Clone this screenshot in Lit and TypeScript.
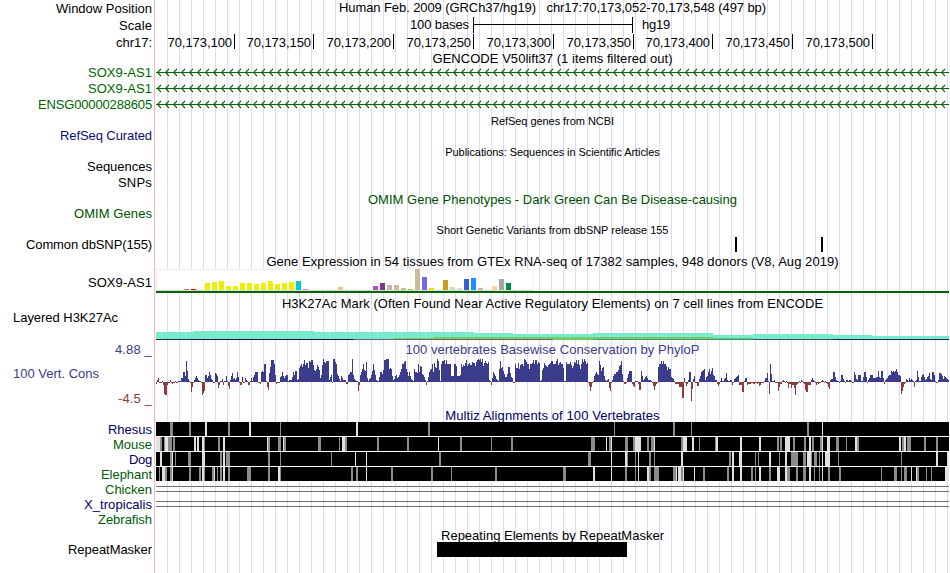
import { LitElement, html, svg, css, nothing } from 'lit';
import { customElement } from 'lit/decorators.js';

const LEFT = 156;
const WIDTH = 793;
const FONT = '"Liberation Sans", Arial, sans-serif';

const pen = document.createElement('canvas').getContext('2d')!;

// letter spacing that gives a text the wanted width
function spacing(text: string, size: number, width: number) {
  pen.font = `${size}px ${FONT}`;
  return `letter-spacing:${((width - pen.measureText(text).width) / text.length).toFixed(3)}px`;
}

interface Label { text: string; width: number; color?: string; dy?: number; left?: boolean; }
interface Title { text: string; width: number; color?: string; dy?: number; small?: boolean; }
interface Row { height: number; labels?: Label[]; title?: Title; art?: unknown; }

const NAVY = '#0c0c78';
const GREEN = '#006400';
const CONS = '#3c3c8c';
const RED = '#8c3c3c';
const CHROM_A = '#000064';
const CHROM_B = '#005a0a';

const rect = (x: number, y: number, w: number, h: number, fill: string) =>
  svg`<rect x=${x - LEFT} y=${y} width=${w} height=${h} fill=${fill}></rect>`;

const scaleArt = [
  rect(473, 0, 1, 16, '#000'),
  rect(632, 0, 1, 16, '#000'),
  rect(473, 7, 160, 1, '#000'),
];

const ticks = [234, 313, 393, 473, 553, 633, 712, 792, 872];
const tickArt = ticks.map((x) => rect(x, 0, 1, 15, '#000'));

const arrows = Array.from({ length: 99 }, (_, i) => {
  const x = 1.5 + i * 8;
  return `M${x + 3.5} 5L${x} 8.5L${x + 3.5} 12`;
}).join('');
const geneArt = [
  rect(156, 8, 793, 1, GREEN),
  svg`<path d=${arrows} fill="none" stroke=${GREEN} stroke-width="1.1"></path>`,
];

const snpArt = [rect(735, 0, 2, 15, '#000'), rect(821, 0, 2, 15, '#000')];

// [x, height, color]
const tissues: [number, number, string][] = [
  [184, 1, '#ee6a50'], [191, 1, '#ff0000'],
  ...[7, 8, 9, 4, 4, 7, 7, 6, 7, 9, 6, 7, 8].map((h, i) => [205 + i * 7, h, '#eeee00'] as [number, number, string]),
  [296, 9, '#00cdcd'], [303, 1, '#ee82ee'], [338, 3, '#eec591'],
  [373, 4, '#b452cd'], [380, 7, '#7a378b'], [387, 5, '#cdb79e'], [394, 5, '#cdb79e'],
  [401, 2, '#cdb79e'], [408, 1, '#9acd32'], [415, 21, '#cdb79e'], [422, 13, '#7a67ee'],
  [429, 2, '#ffd700'], [443, 10, '#cd9b1d'], [450, 3, '#b4eeb4'], [457, 2, '#d9d9d9'],
  [464, 11, '#3a5fcd'], [471, 12, '#1e90ff'], [478, 2, '#cdb79e'], [492, 4, '#ffd39b'],
  [499, 11, '#a6a6a6'], [506, 7, '#008b45'],
];
const gtexArt = [
  rect(156, 1, 378, 22, '#f0f0f0'),
  rect(157, 2, 376, 20, '#fff'),
  rect(156, 22, 378, 1, '#d9d9d9'),
  ...tissues.map(([x, h, c]) => rect(x, 22 - h, 5, h, c)),
  rect(156, 23, 793, 2, GREEN),
];

// [from, to, top, color]
const marks: [number, number, number, string][] = [
  [156, 194, 21, '#78ebcd'], [194, 314, 20, '#78ebcd'], [314, 474, 21, '#78ebcd'],
  [474, 513, 22, '#78ebcd'], [513, 593, 23, '#78ebcd'], [593, 713, 22, '#78ebcd'],
  [713, 753, 24, '#78ebcd'], [753, 833, 23, '#78ebcd'], [833, 872, 24, '#78ebcd'],
  [872, 949, 25, '#78ebcd'],
  [394, 434, 27, '#78c86e'], [434, 713, 26, '#78c86e'], [713, 753, 27, '#64be78'],
  [156, 194, 28, '#1c2c46'], [194, 354, 28, '#1e1450'], [354, 553, 28, '#6c646c'],
  [553, 593, 28, '#78c864'], [593, 713, 28, '#3ca070'], [713, 753, 28, '#3c9a6a'],
  [753, 833, 28, '#32505a'], [833, 949, 28, '#1e1e5a'],
];
const markArt = marks.map(([a, b, y, c]) => rect(a, y, b - a, y === 28 ? 1 : 28 - y, c));

// runs of per-pixel scores; the last value of a run is held up to the next one
const scores = `156:-2 2 4 -1 -1 -1 1 -3 -12 -13 -13 -3 -1 -1 2 -1 -2 -1 -1 1 -1 -1 1 1 1 4 4 10 10 6 21 11 3 1 -1
191:-10 -5 -1 2 4 6 4 2 1 1 -1 -13 -11 -9 7 7 4 6 10 7 3 2 -1 -1 9 8 6 -6 -3 1 1 3 -3 1 1 6 1 -4 -7 2 6 9 3 4 2 4 10 5 -1
240:-3 -3 5 -1 -1 4 2 1 -3 -3 1 4 1 5 7 10 10 10 -1 -1 -2 10 11 10 18 18 1 -5 -8 9 15 22 22 22 18 7 -2 -1 -1 -1
280:5 6 10 6 4 6 7 7 1 2 2 2 5 10 7 11 11 2 3 14 16 18 15 18 22 17 19 19 14 21 20 22 22 17 12 11 13 17 15 12 4 7 17 23 20 19 21 21 21 2 5 7 -1 -1
333:23 23 20 18 8 6 3 1 6 4 2 2 2 -2 -2 7 8 10 10 23 7 3 2 1 1 -9 -3 7 10 13 18 12 11 20 4 1 -17
368:1 3 4 7 11 18 12 7 2 1 1 5 10 10 8 12 22 22 23 23 23 13 14 13 6 2 3 6 7 4 5 7 10 13 18 18 20 21 13 10 6 10 6 3 2 1 4 10 12 11 13
414:13 10 10 9 18 10 16 15 8 7 5 2 -3 1 5 10 12 13 18 10 19 15 14 23 21 12 1 18 21 21 22 18 22 18 18 18 18 6 6 6
454:18 18 16 6 6 6 7 18 15 17 16 19 22 16 18 19 17 17 20 19 19 16 20 22 23 22 23 20 23 16 19 21 19 18 20 2 1 -3 4 10 8 6 3 2 1 13 21 14 15 11 8 5
506:5 8 15 15 9 5 4 -1 -1 18 14 14 19 13 17 18 18 16 23 22 20 18 18 13 18 18 19 22 18 22 22 18 20 19 1 2 12 14 19 17 16 15 17 18 19 21 21 18
556:21 23 17 19 20 18 18 14 1 1 20 18 18 18 20 17 14 16 20 19 22 18 22 17 13 18 23 20 23 21 18 19 17
588:-1 -4 -9 -5 -1 1 6 8 10 8 7 21 17 11 14 15 6 2 1 2 3 -6 -9 -1 2 6 8 8 10 10 12 16 17 21 8 1 -2 -2 -1 4 8 11 11 11 -2 -4 -5 1
637:1 -2 -8 -8 11 6 2 3 5 6 4 2 2 2 1 -1 -4 -8 -4 -2 -1 15 18 18 21 18 21 18 18 16 12 15 13 13 5 4 3 1 -2
679:-5 -5 -5 -16 -16 4 -1 -4 -2 2 10 10 -19 -7 3 6 -1 -1 -4 -4 3 6 10 11 12 13 2 5 6 10 13 8 11 14 7 6 2
717:-2 -4 -2 1 4 1 1 3 4 9 2 1 1 2 2 -3 -1 3 4 5 6 7 -3 -3 -3 -10 -10 1 4 4 -3 -2 -2 -2 -1 -1 -2 -2 -1 -1 -2 -1 -4 -3 -1 -1
764:1 4 4 9 1 -12 18 8 1 1 2 -1 -1 -1 -9 -5 -2 -2 1 2 1 -1 1 -1 -6 -2 -2 -6 -3 -3 -6 -13 -3 -2 -1 1 -1 2 1 -1 -2 -8 -10 -10 -3
811:2 4 2 1 -1 -3 -1 -2 -1 -1 1 2 1 -1 1 -1 -2 -5 -7 2 3 3 10 10 5 2 1 1 -1 1 7 7 3 1 -1 2 2 1 2 2 1 -1 -1 10 7 3 2
858:7 7 7 1 1 5 10 10 5 -1 2 4 7 7 7 4 4 4 5 5 11 5 4 11 11 4 -2 2 3 4 6 7 7 11 10 11 10 11 13 10 7 7 6 4 3 3
901:-12 -9 -5 -2 -1 3 2 1 4 2 3 2 1 -5 1 2 11 5 1 1 5 7 8 5 2 3 5 6 9 3 2 10 10 7 1 -1 -1 2 9 9 8 6 3 6 5 4 3 2`;

const wiggle: number[] = [];
for (const run of scores.split('\n')) {
  const [start, values] = run.split(':');
  const at = Number(start) - LEFT;
  while (wiggle.length < at) wiggle.push(wiggle[wiggle.length - 1]);
  values.split(' ').forEach((v, i) => { wiggle[at + i] = Number(v); });
}
const wigglePath = (sign: number) => wiggle
  .slice(0, WIDTH)
  .map((v, i) => (v * sign > 0 ? `M${i} 41h1v${-v}h-1z` : ''))
  .join('');
const consArt = [
  svg`<path d=${wigglePath(1)} fill=${CONS}></path>`,
  svg`<path d=${wigglePath(-1)} fill=${RED}></path>`,
];

// gaps per species: x, width, g(ray) or w(hite)
const rhesus = '170 3g,189 2g,205 2w,228 2g,249 2w,280 1g,356 2w,428 2g,614 1g,673 2g,691 1g,807 2g,822 1w';
const mouse = '156 4w,160 2g,164 1g,165 3w,168 4g,173 2g,194 2w,197 2w,202 2w,204 1g,218 2g,223 2w,267 1w,268 2g,278 3g,283 1w,284 2g,318 3g,339 1g,342 3w,345 2g,377 2g,407 2g,438 1w,460 2g,491 1g,511 2g,591 4g,606 1w,609 2g,611 1w,625 3g,633 2g,635 6w,647 2g,651 3g,654 1w,681 2g,683 4w,692 2w,699 1g,715 1g,716 2w,740 2w,759 2w,777 2g,780 2g,785 5w,793 2g,804 2g,809 2w,812 2g,820 2g,822 1w,827 3w,836 3g,846 1g,855 2w,857 2g,899 2w,902 2g,904 2w,907 4g,924 2g,936 2g';
const dog = '160 2w,170 2g,172 1w,175 1g,188 3g,202 3w,220 2g,223 2w,226 4g,268 2g,280 1g,331 1g,355 1w,366 1w,439 2g,588 3g,611 1w,625 2w,627 1g,635 1g,638 1w,649 2g,654 1g,681 2w,729 2g,732 2w,739 3w,755 1g,758 1g,769 2w,779 1g,785 2w,791 7g,803 3g,807 4w,811 1g,814 3g,819 1g,822 1w,825 5w,838 1g,901 1g,936 2w,947 2w';
const elephant = '159 1g,162 3w,165 2g,170 2g,172 1w,189 2g,199 2g,202 2w,204 1g,212 2g,214 1w,217 1g,220 2g,223 2w,228 2g,247 4g,268 2g,278 2w,280 1g,351 2g,356 2g,366 1w,391 2g,431 2g,451 1g,495 2g,563 3g,593 2w,611 1w,625 2g,635 1g,638 1w,647 2w,649 2g,654 5g,673 3g,676 1w,678 3w,681 2g,683 1w,694 1w,703 2g,727 2g,732 2w,740 2w,751 2g,755 1g,759 2w,769 2g,777 3w,785 2w,787 3g,796 2g,803 3g,809 2w,814 1g,819 1g,822 1w,828 2g,839 2g,881 1g,894 3g,901 1g,904 3g,911 1w,916 1w,917 2g,926 1g,931 1g,945 4w';
const align = (gaps: string) => [
  rect(156, 0, 793, 14, '#000'),
  rect(156, 14, 793, 1, '#fff'),
  ...gaps.split(',').map((gap) => {
    const [x, w] = gap.split(' ');
    return rect(Number(x), 0, parseInt(w), 14, w.endsWith('g') ? '#8c8c8c' : '#e1e1e1');
  }),
];

const bridge = [rect(156, 4, 793, 1, '#707070'), rect(156, 9, 793, 1, '#707070')];

const rows: Row[] = [
  { height: 17, labels: [{ text: 'Window Position', width: 96, dy: 1 }], title: { text: 'Human Feb. 2009 (GRCh37/hg19)   chr17:70,173,052-70,173,548 (497 bp)', width: 427 } },
  { height: 17, labels: [{ text: 'Scale', width: 33, dy: 1 }], art: scaleArt },
  { height: 17, labels: [{ text: 'chr17:', width: 36, dy: 1 }], art: tickArt },
  { height: 13, title: { text: 'GENCODE V50lift37 (1 items filtered out)', width: 240, dy: 0 } },
  { height: 16, labels: [{ text: 'SOX9-AS1', width: 64, color: GREEN, dy: 1 }], art: geneArt },
  { height: 16, labels: [{ text: 'SOX9-AS1', width: 64, color: GREEN, dy: 1 }], art: geneArt },
  { height: 16, labels: [{ text: 'ENSG00000288605', width: 114, color: GREEN, dy: 1 }], art: geneArt },
  { height: 16, title: { text: 'RefSeq genes from NCBI', width: 123, small: true, dy: 2 } },
  { height: 15, labels: [{ text: 'RefSeq Curated', width: 92, color: NAVY }] },
  { height: 16, title: { text: 'Publications: Sequences in Scientific Articles', width: 215, small: true, dy: 2 } },
  { height: 15, labels: [{ text: 'Sequences', width: 65 }] },
  { height: 16, labels: [{ text: 'SNPs', width: 34, dy: 1 }] },
  { height: 16, title: { text: 'OMIM Gene Phenotypes - Dark Green Can Be Disease-causing', width: 369, color: '#005000', dy: 2 } },
  { height: 15, labels: [{ text: 'OMIM Genes', width: 78, color: '#005000' }] },
  { height: 16, title: { text: 'Short Genetic Variants from dbSNP release 155', width: 232, small: true, dy: 2 } },
  { height: 15, labels: [{ text: 'Common dbSNP(155)', width: 126 }], art: snpArt },
  { height: 16, title: { text: 'Gene Expression in 54 tissues from GTEx RNA-seq of 17382 samples, 948 donors (V8, Aug 2019)', width: 573, dy: 2 } },
  { height: 27, labels: [{ text: 'SOX9-AS1', width: 64, dy: 7 }], art: gtexArt },
  { height: 16, title: { text: 'H3K27Ac Mark (Often Found Near Active Regulatory Elements) on 7 cell lines from ENCODE', width: 542, dy: 1 } },
  { height: 30, labels: [{ text: 'Layered H3K27Ac', width: 105, left: true, dy: -1 }], art: markArt },
  {
    height: 66,
    labels: [
      { text: '4.88 _', width: 37, color: CONS, dy: 1 },
      { text: '100 Vert. Cons', width: 86, color: CONS, left: true, dy: 9 },
      { text: '-4.5 _', width: 34, color: RED, dy: 10 },
    ],
    title: { text: '100 vertebrates Basewise Conservation by PhyloP', width: 294, color: CONS, dy: 1 },
    art: consArt,
  },
  { height: 15, title: { text: 'Multiz Alignments of 100 Vertebrates', width: 215, color: CHROM_A, dy: 1 } },
  { height: 15, labels: [{ text: 'Rhesus', width: 44, color: CHROM_A }], art: align(rhesus) },
  { height: 15, labels: [{ text: 'Mouse', width: 39, color: CHROM_B }], art: align(mouse) },
  { height: 15, labels: [{ text: 'Dog', width: 23, color: CHROM_A }], art: align(dog) },
  { height: 15, labels: [{ text: 'Elephant', width: 51, color: CHROM_B }], art: align(elephant) },
  { height: 15, labels: [{ text: 'Chicken', width: 47, color: CHROM_B }], art: bridge },
  { height: 15, labels: [{ text: 'X_tropicalis', width: 68, color: CHROM_A }], art: bridge },
  { height: 15, labels: [{ text: 'Zebrafish', width: 54, color: CHROM_B }] },
  { height: 15, title: { text: 'Repeating Elements by RepeatMasker', width: 223, dy: 1 } },
  { height: 31, labels: [{ text: 'RepeatMasker', width: 84 }], art: rect(437, 0, 190, 15, '#000') },
];

@customElement('app-root')
export class AppRoot extends LitElement {
  static styles = css`
    :host {
      display: block;
      width: 950px;
      height: 573px;
      overflow: hidden;
      background: #fff;
      color: #000;
      font: 13px/15px "Liberation Sans", Arial, sans-serif;
    }
    .browser {
      height: 573px;
      background:
        linear-gradient(#ffb4b4, #ffb4b4) 154px 0 / 1px 100% no-repeat,
        repeating-linear-gradient(90deg, #dcdcfa 0 1px, transparent 1px 12px) 167px 0 / 783px 100% no-repeat;
    }
    .row {
      display: grid;
      grid-template-columns: 152px 793px;
      column-gap: 4px;
    }
    .labels {
      display: flex;
      flex-direction: column;
      align-items: flex-end;
    }
    .label,
    .left,
    .title,
    .coord {
      white-space: pre;
    }
    .left {
      align-self: flex-start;
      margin-left: 13px;
    }
    .canvas {
      display: grid;
      justify-items: center;
      align-items: start;
    }
    .canvas > * {
      grid-area: 1 / 1;
    }
    .title {
      height: 15px;
    }
    .small {
      font-size: 11px;
    }
    svg {
      display: block;
      width: 793px;
      overflow: visible;
    }
    .scale {
      justify-self: start;
      display: flex;
      gap: 173px;
      margin-left: 254px;
    }
    .coords {
      justify-self: start;
      display: flex;
      margin-top: 1px;
    }
    .coord {
      text-align: right;
    }
  `;

  renderLabel(l: Label) {
    return html`<div class=${l.left ? 'left' : 'label'}
      style="margin-top:${l.dy ?? 0}px;color:${l.color ?? '#000'};${spacing(l.text, 13, l.width)}">${l.text}</div>`;
  }

  renderTitle(t: Title) {
    return html`<div class="title ${t.small ? 'small' : ''}"
      style="margin-top:${t.dy ?? 0}px;color:${t.color ?? '#000'};${spacing(t.text, t.small ? 11 : 13, t.width)}">${t.text}</div>`;
  }

  renderScale() {
    return html`<div class="scale">
      <span style=${spacing('100 bases', 13, 59)}>100 bases</span><span style=${spacing('hg19', 13, 28)}>hg19</span>
    </div>`;
  }

  renderCoords() {
    return html`<div class="coords">${ticks.map((x, i) => {
      const text = `70,173,${100 + i * 50}`;
      const from = i ? ticks[i - 1] : LEFT;
      return html`<div class="coord" style="width:${x - from - (i ? 0 : 2)}px;${spacing(text, 13, 64.5)}">${text}</div>`;
    })}</div>`;
  }

  render() {
    return html`
      <div class="browser">
        ${rows.map((row, i) => html`
          <div class="row" style="height:${row.height}px">
            <div class="labels">${row.labels?.map((l) => this.renderLabel(l))}</div>
            <div class="canvas">
              ${row.art ? svg`<svg height=${row.height}>${row.art}</svg>` : nothing}
              ${i === 1 ? this.renderScale() : nothing}
              ${i === 2 ? this.renderCoords() : nothing}
              ${row.title ? this.renderTitle(row.title) : nothing}
            </div>
          </div>`)}
      </div>
    `;
  }
}
